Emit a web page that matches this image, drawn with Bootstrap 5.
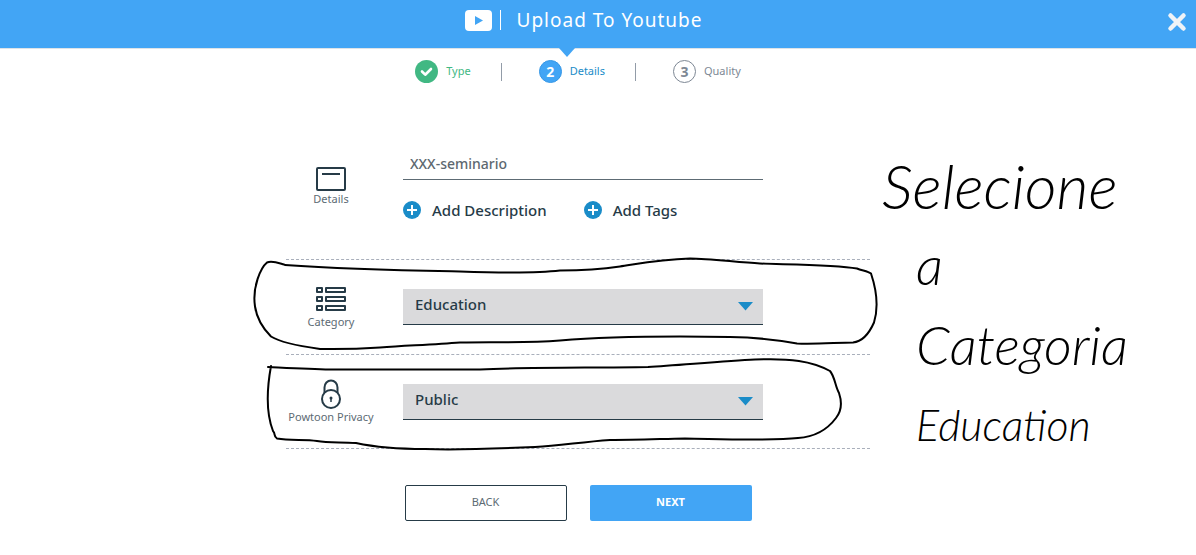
<!DOCTYPE html>
<html lang="en">
<head>
<meta charset="utf-8">
<meta name="viewport" content="width=device-width, initial-scale=1">
<title>Upload To Youtube</title>
<link href="https://cdn.jsdelivr.net/npm/bootstrap@5.3.0/dist/css/bootstrap.min.css" rel="stylesheet">
<style>
  :root { --sky: #42a5f5; --ocean: #1a8cc8; --ink: #263b47; --slate: #5d6b74; }
  body { font-family: "Noto Sans", sans-serif; font-size: 14px; color: var(--ink); background: #fff; overflow-x: hidden; }
  .topbar { background: var(--sky); height: 49px; border-bottom: 1px solid #dde3e8; padding-bottom: 8px; }
  .topbar h1 { font-family: "Noto Sans", sans-serif; font-size: 19px; font-weight: 400; letter-spacing: 1px; line-height: 24px; }
  .title-rule { width: 1px; height: 20px; background: #fff; }
  .close-x { width: 29px; padding-top: 3px; }
  .page-body { padding-right: 40px; }
  .steps { font-size: 11px; padding-top: 11px; }
  .step-dot { width: 23px; height: 23px; font-size: 14px; font-weight: 700; line-height: 14px; }
  .step-done { color: #41b883; }
  .step-done .step-dot { background: #41b883; }
  .step-now { color: var(--ocean); }
  .step-now .step-dot { background: var(--sky); border: 1px solid #3697e6; color: #fff; }
  .step-next { color: #7d8794; }
  .step-next .step-dot { border: 1px solid #7d8794; }
  .step-rule { width: 1px; height: 18px; background: #929ca8; margin: 0 37px 0 30px; }
  .pointer { top: -12px; left: 20px; }
  .sheet { max-width: 584px; }
  .line-row { border-bottom: 1px dashed #a9afbb; gap: 27px; }
  .line-row-first { padding: 64px 0 23px; }
  .line-row-mid { height: 95px; }
  .line-row-last { height: 94px; }
  .row-label { width: 90px; font-size: 11px; line-height: 14px; color: var(--slate); white-space: nowrap; }
  .fields { width: 360px; }
  .title-input { border: 0; border-bottom: 1px solid var(--slate); border-radius: 0; font-size: 14px; font-weight: 500; color: #5d6870; padding: 0 7px; height: 33px; }
  .add-row { gap: 37px; }
  .add-btn { font-size: 15px; font-weight: 500; line-height: 20px; color: var(--ink); }
  .pick { background: #dadadc; border: 0; border-bottom: 1px solid var(--ink); border-radius: 0; height: 36px; font-size: 15px; font-weight: 500; color: var(--ink); padding: 0 12px 4px; }
  .caret { right: 10px; top: 13px; }
  .actions { gap: 23px; padding-top: 36px; }
  .act { width: 162px; height: 36px; border-radius: 2px; font-size: 11px; padding: 0 0 2px; }
  .act-back, .act-back:hover { border: 1px solid var(--ink); color: var(--slate); background: #fff; }
  .act-next, .act-next:hover { background: var(--sky); border: 0; color: #fff; font-weight: 700; }
  .loop { top: 0; left: 0; overflow: visible; }
  .note { left: 100%; top: 62px; margin-left: 12px; color: #000; font-family: Lato, sans-serif; font-style: italic; font-weight: 300; white-space: nowrap; font-size: 54px; line-height: 80px; }
  .note-big { font-size: 62px; }
  .note-in { padding-left: 34px; }
  .note-small { font-size: 43px; }
</style>
</head>
<body>
<header class="topbar d-flex align-items-center">
  <div class="flex-grow-1 d-flex justify-content-center align-items-center text-white">
    <svg width="27" height="21" viewBox="0 0 27 21" aria-hidden="true"><rect width="27" height="21" rx="4" fill="#fff"/><path d="M10 6v9l8-4.500z" fill="#42a5f5"/></svg>
    <span class="title-rule ms-2 me-3"></span>
    <h1 class="m-0">Upload To Youtube</h1>
  </div>
  <button type="button" class="close-x btn px-0 pb-0 border-0 lh-1 text-start" aria-label="Close">
    <svg width="20" height="20" viewBox="0 0 20 20"><path d="M3.500 3.500l13 13M16.500 3.500l-13 13" stroke="#eff3f7" stroke-width="4.500" stroke-linecap="round"/></svg>
  </button>
</header>

<main class="page-body">
  <ol class="steps list-unstyled d-flex justify-content-center align-items-center m-0">
    <li class="step-done d-flex align-items-center gap-2">
      <span class="step-dot rounded-circle d-flex align-items-center justify-content-center"><svg width="13" height="11" viewBox="0 0 13 11" aria-label="Done"><path d="M2 5.500l3.200 3.200L11 3" fill="none" stroke="#fff" stroke-width="2.600" stroke-linecap="round" stroke-linejoin="round"/></svg></span>
      Type
    </li>
    <li class="step-rule" aria-hidden="true"></li>
    <li class="step-now d-flex align-items-center gap-2 position-relative">
      <svg class="pointer position-absolute" width="16" height="9" viewBox="0 0 16 9" aria-hidden="true"><path d="M0 0h16L8 9z" fill="#42a5f5"/></svg>
      <span class="step-dot rounded-circle d-flex align-items-center justify-content-center">2</span>
      Details
    </li>
    <li class="step-rule" aria-hidden="true"></li>
    <li class="step-next d-flex align-items-center gap-2">
      <span class="step-dot rounded-circle d-flex align-items-center justify-content-center">3</span>
      Quality
    </li>
  </ol>

  <form class="sheet mx-auto position-relative">
    <div class="line-row line-row-first d-flex">
      <label for="video-title" class="row-label text-center pt-3">
        <svg class="d-block mx-auto mt-1" width="32" height="25" viewBox="0 0 32 25" fill="none" stroke="#263b47" stroke-width="2"><rect x="2" y="1" width="28" height="22" rx="1"/><path d="M7 7h18"/></svg>
        Details
      </label>
      <div class="fields">
        <input id="video-title" type="text" class="title-input form-control shadow-none bg-transparent" value="XXX-seminario">
        <div class="add-row d-flex mt-3 pt-1 pb-3">
          <button type="button" class="add-btn btn p-0 border-0 d-flex align-items-center">
            <svg class="me-2" width="21" height="18" viewBox="0 0 21 18"><circle cx="9" cy="9" r="9" fill="#1a8cc8"/><path d="M9 4v10M4 9h10" stroke="#fff" stroke-width="2"/></svg>Add Description
          </button>
          <button type="button" class="add-btn btn p-0 border-0 d-flex align-items-center">
            <svg class="me-2" width="21" height="18" viewBox="0 0 21 18"><circle cx="9" cy="9" r="9" fill="#1a8cc8"/><path d="M9 4v10M4 9h10" stroke="#fff" stroke-width="2"/></svg>Add Tags
          </button>
        </div>
      </div>
    </div>

    <div class="line-row line-row-mid d-flex align-items-center position-relative">
      <label for="category" class="row-label text-center">
        <svg class="d-block mx-auto mb-1" width="32" height="25" viewBox="0 0 32 25" fill="none" stroke="#263b47" stroke-width="2" stroke-linejoin="round"><rect x="2" y="2" width="5" height="4"/><rect x="11" y="2" width="19" height="4"/><rect x="2" y="11" width="5" height="4"/><rect x="11" y="11" width="19" height="4"/><rect x="2" y="20" width="5" height="4"/><rect x="11" y="20" width="19" height="4"/></svg>
        Category
      </label>
      <div class="fields position-relative">
        <select id="category" class="pick form-select shadow-none"><option>Education</option></select>
        <svg class="caret position-absolute pe-none" width="15" height="9" viewBox="0 0 15 9" aria-hidden="true"><path d="M0 0h15L7.500 8.500z" fill="#1a8cc8"/></svg>
      </div>
      <svg class="loop position-absolute pe-none" width="584" height="94" viewBox="286 260 584 94" fill="none" stroke="#000" stroke-width="2" stroke-linecap="round" aria-hidden="true"><path d="M284 264C277 262 272 260 267 262C261 267 252 286 255 306C257 319 264 329 271 336C284 344 310 347 321 348.500C350 349 365 348 380 347C410 345 435 344 460 342C500 341 525 343 560 340C595 337 640 336 680 336L730 336.500C760 337 781 340 797 343C815 344 838 342 853 342C864 341 870 331 874 322C878 309 877 291 871 273C868 271 862 270 857 268C835 264 785 264 760 263C738 262 710 258 690 258C660 259 640 263 620 266C600 269 580 270 560 270C535 273 490 272 460 271C410 270 350 269 285 264.500" transform="translate(0 .5)"/></svg>
    </div>

    <div class="line-row line-row-last d-flex align-items-center position-relative">
      <label for="privacy" class="row-label text-center">
        <svg class="d-block mx-auto" width="22" height="31" viewBox="0 0 22 31" fill="none" stroke="#263b47" stroke-width="2"><circle cx="11" cy="20" r="9"/><path d="M4.500 14V8.500a6.500 7 0 0 1 13 0V14"/><circle cx="11" cy="19" r="1.500" fill="#263b47" stroke="none"/><path d="M11 19v4" stroke-width="1.500"/></svg>
        Powtoon Privacy
      </label>
      <div class="fields position-relative">
        <select id="privacy" class="pick form-select shadow-none"><option>Public</option></select>
        <svg class="caret position-absolute pe-none" width="15" height="9" viewBox="0 0 15 9" aria-hidden="true"><path d="M0 0h15L7.500 8.500z" fill="#1a8cc8"/></svg>
      </div>
      <svg class="loop position-absolute pe-none" width="584" height="93" viewBox="286 355 584 93" fill="none" stroke="#000" stroke-width="2" stroke-linecap="round" aria-hidden="true"><path d="M268 367C290 368 310 369 330 369.500L480 369.500C530 367 590 368 648 367C680 365 725 361 755 359.500C790 358 812 361 830 371C835 377 835 386 839 393C843 405 840 413 836 418C827 430 814 437 798 438C770 441 720 439 685 438.500C660 439 635 440 610 440C580 442 560 446 535 447C490 449 450 450 425 449C390 449 370 446 356 443C340 442 328 443 317 441C305 439 290 441 277 438.500C273 436 276 434 273 431C266 413 267 388 271 366"/></svg>
    </div>

    <aside class="note position-absolute">
      <div class="note-big">Selecione</div>
      <div class="note-in">a</div>
      <div class="note-in">Categoria</div>
      <div class="note-in note-small">Education</div>
    </aside>

    <div class="actions d-flex justify-content-center">
      <button type="button" class="act act-back btn">BACK</button>
      <button type="submit" class="act act-next btn">NEXT</button>
    </div>
  </form>
</main>
<script src="https://cdn.jsdelivr.net/npm/bootstrap@5.3.0/dist/js/bootstrap.bundle.min.js"></script>
</body>
</html>
